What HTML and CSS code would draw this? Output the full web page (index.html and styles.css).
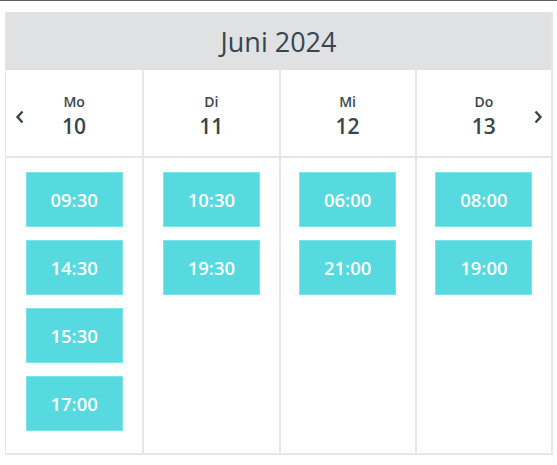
FILE: index.html
```html
<!DOCTYPE html>
<html lang="de">
<head>
  <meta charset="UTF-8" />
  <meta name="viewport" content="width=device-width, initial-scale=1.0" />
  <title>Termin wählen</title>
  <link rel="stylesheet" href="styles.css">
</head>
<body>
  <div class="topline"></div>

  <div class="calendar">
    <div class="month">Juni 2024</div>

    <div class="days">
      <a class="nav prev">
        <svg width="10" height="14" viewBox="0 0 10 14"><path d="M7.5 1.5 L2.5 7 L7.5 12.5" fill="none" stroke="#37464e" stroke-width="2.4"/></svg>
      </a>
      <div class="day"><span class="name">Mo</span><span class="num">10</span></div>
      <div class="day"><span class="name">Di</span><span class="num">11</span></div>
      <div class="day"><span class="name">Mi</span><span class="num">12</span></div>
      <div class="day"><span class="name">Do</span><span class="num">13</span></div>
      <a class="nav next">
        <svg width="10" height="14" viewBox="0 0 10 14"><path d="M2.5 1.5 L7.5 7 L2.5 12.5" fill="none" stroke="#37464e" stroke-width="2.4"/></svg>
      </a>
    </div>

    <div class="slots">
      <div class="col">
        <button class="slot">09:30</button>
        <button class="slot">14:30</button>
        <button class="slot">15:30</button>
        <button class="slot">17:00</button>
      </div>
      <div class="col">
        <button class="slot">10:30</button>
        <button class="slot">19:30</button>
      </div>
      <div class="col">
        <button class="slot">06:00</button>
        <button class="slot">21:00</button>
      </div>
      <div class="col">
        <button class="slot">08:00</button>
        <button class="slot">19:00</button>
      </div>
    </div>
  </div>
</body>
</html>
```

FILE: styles.css
```css
body {
  margin: 0;
  padding: 0;
  background: white;
  font-family: 'Open Sans', 'Noto Sans', sans-serif;
  color: #37464e;
}

.topline {
  height: 1px;
  background: #5f5f5f;
}

.calendar {
  margin: 11px 5px 0 5px;
  width: 548px;
  box-sizing: border-box;
  border: 1px solid #e6e6e6;
  border-right-width: 2px;
  border-bottom-width: 2px;
  border-top: none;
}

.month {
  height: 58px;
  background: #e0e1e3;
  display: flex;
  justify-content: center;
  align-items: center;
  font-size: 27px;
  color: #37464e;
}

.days {
  position: relative;
  display: grid;
  grid-template-columns: repeat(4, 1fr);
  height: 88px;
  border-bottom: 2px solid #e6e6e6;
  box-sizing: border-box;
}

.day {
  display: flex;
  flex-direction: column;
  align-items: center;
  justify-content: center;
  padding-top: 6px;
  border-left: 2px solid #e6e6e6;
}

.day:nth-child(2) {
  border-left: none;
}

.day .name {
  font-size: 14px;
  font-weight: 600;
  line-height: 20px;
}

.day .num {
  font-size: 21px;
  font-weight: 600;
  line-height: 28px;
}

.nav {
  position: absolute;
  top: 37px;
  cursor: pointer;
}

.nav.prev {
  left: 9px;
}

.nav.next {
  right: 8px;
}

.slots {
  display: grid;
  grid-template-columns: repeat(4, 1fr);
  min-height: 295px;
}

.col {
  display: flex;
  flex-direction: column;
  align-items: center;
  padding-top: 14px;
  border-left: 2px solid #e6e6e6;
}

.col:first-child {
  border-left: none;
}

.slot {
  width: 97px;
  height: 55px;
  margin-bottom: 13px;
  background: #56dae0;
  border: 1px solid #7ae4e8;
  color: white;
  font-family: 'Open Sans', 'Noto Sans', sans-serif;
  font-size: 18.5px;
  font-weight: 600;
  cursor: pointer;
}
```
